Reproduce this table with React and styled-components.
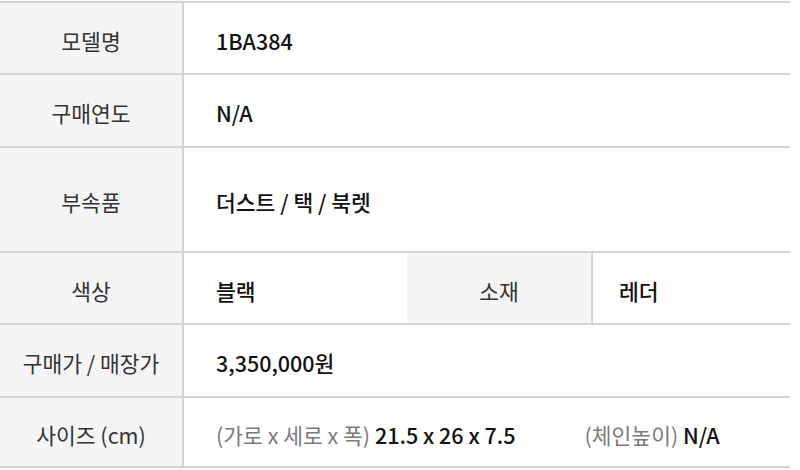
import React from "react";
import styled, { createGlobalStyle } from "styled-components";

const Global = createGlobalStyle`
  html, body { margin: 0; padding: 0; background: #fff; }
  body { font-family: "Noto Sans CJK KR", "Noto Sans", sans-serif; -webkit-font-smoothing: antialiased; }
`;

const Table = styled.div`
  width: 790px;
  margin-top: 1px;
  border-top: 2px solid #d4d4d4;
  display: flex;
  flex-direction: column;
`;

const Row = styled.div`
  display: grid;
  grid-template-columns: ${(p) => (p.$split ? "184px 223px 186px 1fr" : "184px 1fr")};
  height: ${(p) => p.$h}px;
  border-bottom: 2px solid #d4d4d4;
  box-sizing: border-box;
`;

const Label = styled.div`
  background: #f5f5f5;
  border-right: 2px solid #d4d4d4;
  display: flex;
  align-items: center;
  justify-content: center;
  padding-top: 4px;
  font-size: 21.5px;
  color: #333;
`;

const Value = styled.div`
  display: flex;
  align-items: center;
  padding-left: ${(p) => p.$pl ?? 32}px;
  padding-top: 4px;
  font-size: 21.5px;
  font-weight: 500;
  color: #111;
  gap: ${(p) => p.$gap ?? 0}px;
`;

const Muted = styled.span`
  color: #7a7a7a;
  font-weight: 400;
`;

const Part = styled.span`
  white-space: pre;
`;

export default function App() {
  return (
    <>
      <Global />
      <Table>
        <Row $h={72}>
          <Label>모델명</Label>
          <Value>1BA384</Value>
        </Row>
        <Row $h={73}>
          <Label>구매연도</Label>
          <Value>N/A</Value>
        </Row>
        <Row $h={105}>
          <Label>부속품</Label>
          <Value>더스트 / 택 / 북렛</Value>
        </Row>
        <Row $h={72} $split>
          <Label>색상</Label>
          <Value>블랙</Value>
          <Label>소재</Label>
          <Value $pl={26}>레더</Value>
        </Row>
        <Row $h={73}>
          <Label>구매가 / 매장가</Label>
          <Value>3,350,000원</Value>
        </Row>
        <Row $h={70}>
          <Label>사이즈 (cm)</Label>
          <Value $gap={69}>
            <Part>
              <Muted>(가로 x 세로 x 폭)</Muted> 21.5 x 26 x 7.5
            </Part>
            <Part>
              <Muted>(체인높이)</Muted> N/A
            </Part>
          </Value>
        </Row>
      </Table>
    </>
  );
}
